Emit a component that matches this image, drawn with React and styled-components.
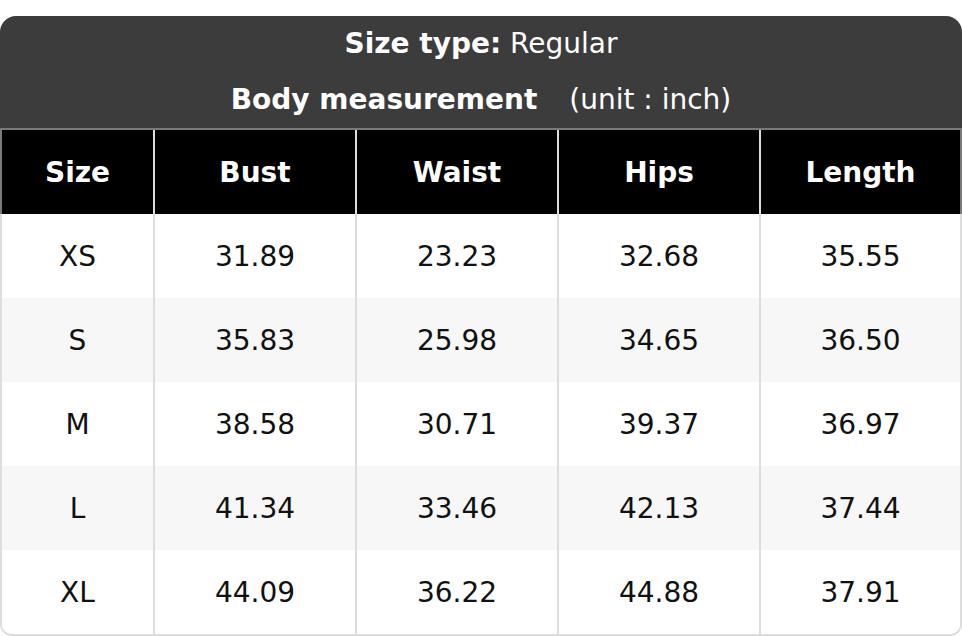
import React from 'react';
import styled, { createGlobalStyle } from 'styled-components';

const GlobalStyle = createGlobalStyle`
  html, body {
    margin: 0;
    padding: 0;
    background: #ffffff;
  }
  body {
    font-family: "DejaVu Sans", "Liberation Sans", sans-serif;
  }
`;

const Card = styled.div`
  width: 962px;
  margin-top: 16px;
  display: flex;
  flex-direction: column;
`;

const Title = styled.div`
  background: #3c3c3c;
  color: #ffffff;
  border-radius: 16px 16px 0 0;
  padding: 0;
  height: 114px;
  box-sizing: border-box;
  border-bottom: 2px solid #7a7a7a;
  display: flex;
  flex-direction: column;
  align-items: center;
`;

const TitleLine = styled.div`
  line-height: 56px;
  font-size: 28px;
  white-space: pre;
`;

const Strong = styled.span`
  font-weight: bold;
`;

const Unit = styled.span`
  margin-left: 32px;
`;

const Row = styled.div`
  display: grid;
  grid-template-columns: 151px 202px 202px 202px 1fr;
  height: 84px;
  background: ${({ $head, $alt }) => ($head ? '#000000' : $alt ? '#f7f7f7' : '#ffffff')};
  border-left: ${({ $head }) => ($head ? '2px solid #7a7a7a' : 'none')};
  border-right: ${({ $head }) => ($head ? '2px solid #7a7a7a' : 'none')};
`;

const Cell = styled.div`
  display: flex;
  align-items: center;
  justify-content: center;
  font-size: 28px;
  font-weight: ${({ $head }) => ($head ? 'bold' : 'normal')};
  color: ${({ $head }) => ($head ? '#ffffff' : '#111111')};
  & + & {
    border-left: 2px solid ${({ $head }) => ($head ? '#7a7a7a' : '#dddddd')};
  }
`;

const Body = styled.div`
  border: 2px solid #dddddd;
  border-top: none;
  border-radius: 0 0 12px 12px;
  overflow: hidden;
`;

const columns = ['Size', 'Bust', 'Waist', 'Hips', 'Length'];

const rows = [
  ['XS', '31.89', '23.23', '32.68', '35.55'],
  ['S', '35.83', '25.98', '34.65', '36.50'],
  ['M', '38.58', '30.71', '39.37', '36.97'],
  ['L', '41.34', '33.46', '42.13', '37.44'],
  ['XL', '44.09', '36.22', '44.88', '37.91'],
];

export default function App() {
  return (
    <>
      <GlobalStyle />
      <Card>
        <Title>
          <TitleLine>
            <Strong>Size type:</Strong> Regular
          </TitleLine>
          <TitleLine>
            <Strong>Body measurement</Strong>
            <Unit>(unit : inch)</Unit>
          </TitleLine>
        </Title>
        <Row $head>
          {columns.map((c) => (
            <Cell key={c} $head>
              {c}
            </Cell>
          ))}
        </Row>
        <Body>
          {rows.map((r, i) => (
            <Row key={r[0]} $alt={i % 2 === 1}>
              {r.map((v, j) => (
                <Cell key={j}>{v}</Cell>
              ))}
            </Row>
          ))}
        </Body>
      </Card>
    </>
  );
}
